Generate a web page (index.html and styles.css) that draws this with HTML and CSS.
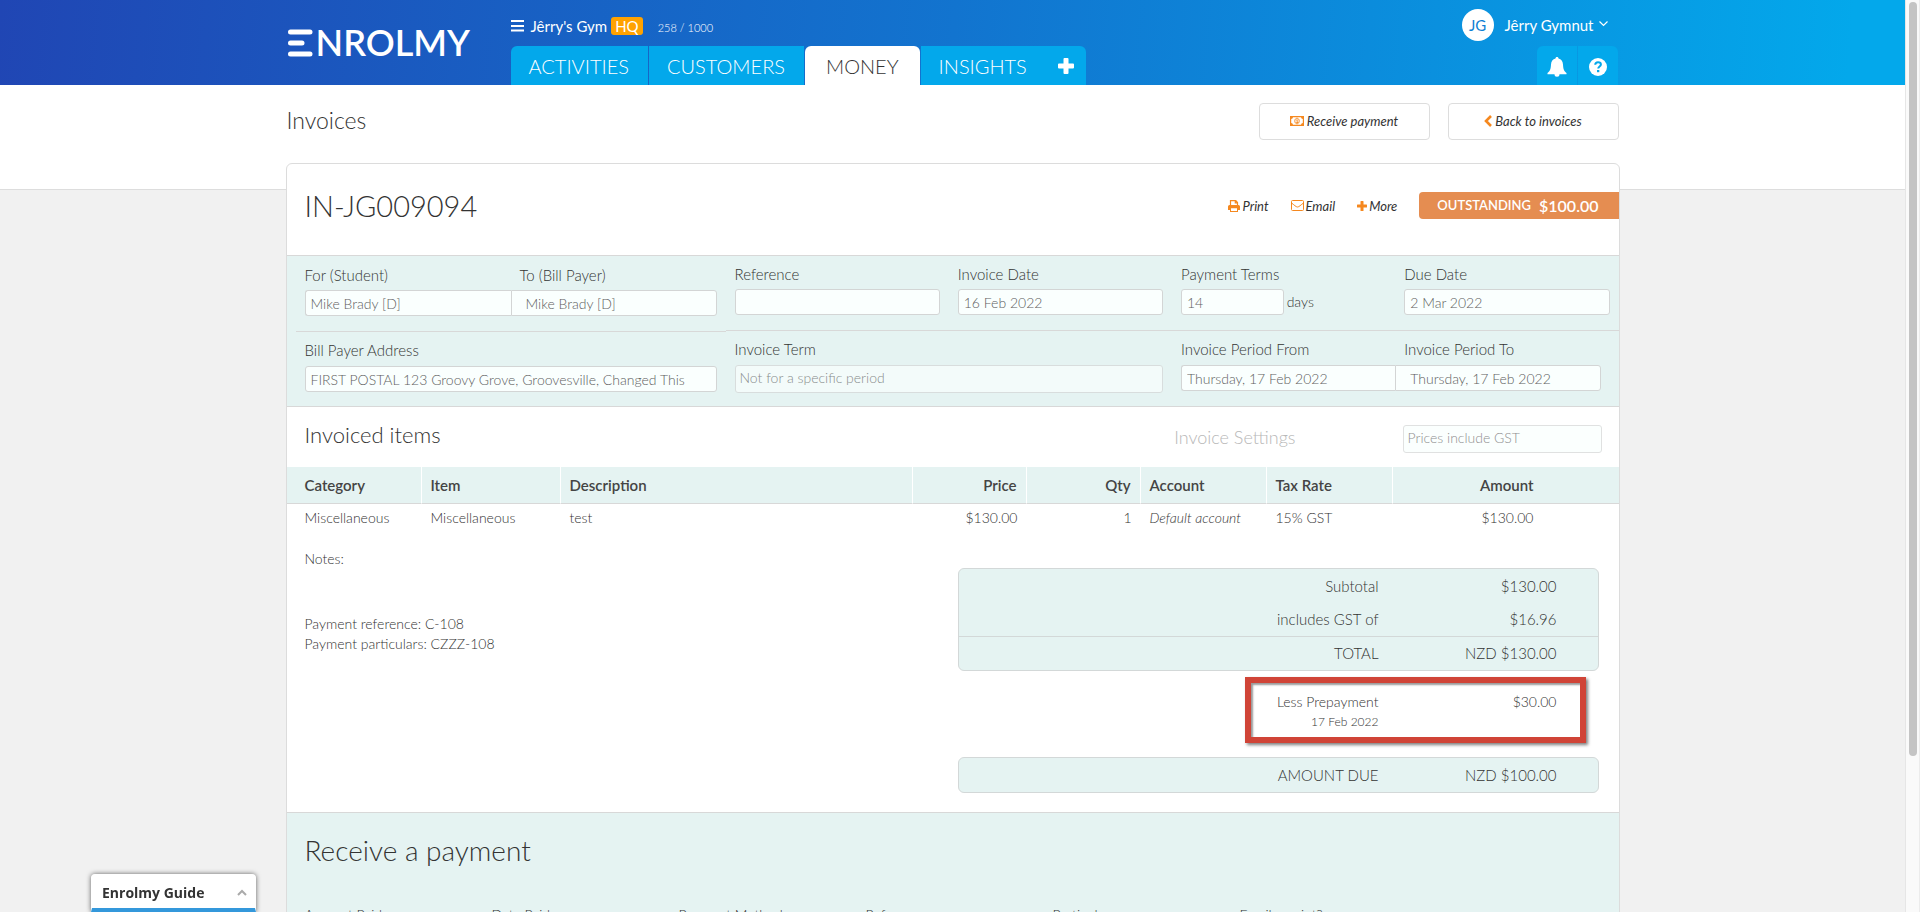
FILE: index.html
```html
<!DOCTYPE html>
<html lang="en">
<head>
  <meta charset="UTF-8">
  <meta name="viewport" content="width=device-width, initial-scale=1.0">
  <title>Invoice IN-JG009094 - Enrolmy</title>
  <link rel="stylesheet" href="styles.css">
</head>
<body>
  <div class="page">
    <header class="topbar">
      <div class="wrap topbar-inner">
        <a class="logo" href="#" aria-label="Enrolmy">
          <svg width="25" height="28" viewBox="0 0 25 28" fill="none" stroke="#fff" stroke-width="5" stroke-linecap="round"><path d="M2.5 3h19.500M2.500 14h11.500M2.500 25h19.500"/></svg>
          <span>NROLMY</span>
        </a>
        <div class="nav-side">
          <div class="org">
            <button class="menu-btn" aria-label="Menu">
              <svg width="13" height="12" viewBox="0 0 13 12" fill="#fff"><path d="M0 0h13v2H0zM0 5h13v2H0zM0 9.500h13v2H0z"/></svg>
            </button>
            <span class="org-name">Jêrry's Gym</span>
            <span class="hq">HQ</span>
            <span class="quota">258 / 1000</span>
          </div>
          <nav class="tabs">
            <a href="#">ACTIVITIES</a>
            <a href="#">CUSTOMERS</a>
            <a href="#" class="active">MONEY</a>
            <a href="#" class="insights">INSIGHTS
              <svg width="16" height="16" viewBox="0 0 16 16" fill="#fff"><path d="M6.500 0h3q1 0 1 1v4.500H15q1 0 1 1v3q0 1-1 1h-4.500V15q0 1-1 1h-3q-1 0-1-1v-4.500H1q-1 0-1-1v-3q0-1 1-1h4.500V1q0-1 1-1z"/></svg>
            </a>
          </nav>
        </div>
        <div class="user-side">
          <div class="user">
            <span class="avatar">JG</span>
            <a href="#">Jêrry Gymnut
              <svg width="9" height="6" viewBox="0 0 9 6" fill="none" stroke="#fff" stroke-width="1.200"><path d="M.5.5l4 4 4-4"/></svg>
            </a>
          </div>
          <div class="tools">
            <button aria-label="Notifications">
              <svg width="20" height="20" viewBox="0 0 20 20" fill="#fff"><path d="M10 0c1 0 1.500.7 1.500 1.500 2.800.6 4.300 2.700 4.500 6 .2 4.500 1 6.700 3.500 8.500v1.200h-7a2.500 2.500 0 0 1-5 0h-7V16C3 14.200 3.800 12 4 7.500c.2-3.300 1.700-5.400 4.500-6C8.500.7 9 0 10 0z"/></svg>
            </button>
            <button aria-label="Help">
              <svg width="18" height="18" viewBox="0 0 18 18"><circle cx="9" cy="9" r="9" fill="#fff"/><path d="M6.200 6.800C6.300 5 7.500 4.200 9 4.200c1.700 0 2.900.9 2.900 2.300 0 1.900-2.700 2-2.700 4" fill="none" stroke="#03a8eb" stroke-width="2"/><rect x="8" y="12" width="2.300" height="2.200" fill="#03a8eb"/></svg>
            </button>
          </div>
        </div>
      </div>
    </header>

    <div class="title-band">
      <div class="wrap title-inner">
        <h1>Invoices</h1>
        <div class="title-actions">
          <button class="btn">
            <svg width="14" height="10" viewBox="0 0 14 10"><path fill="#f5881f" fill-rule="evenodd" d="M0 0h14v10H0zM3 1.200A2 2 0 0 1 1.200 3v4A2 2 0 0 1 3 8.800h8A2 2 0 0 1 12.800 7V3A2 2 0 0 1 11 1.200z"/><path d="M7 2.200c1.400 0 2.200 1.200 2.200 2.800S8.400 7.800 7 7.800 4.800 6.600 4.800 5 5.600 2.200 7 2.200zM6.300 4.200L7.200 3.500v3M6.200 6.500h2" fill="none" stroke="#f5881f" stroke-width=".9"/></svg>
            Receive payment
          </button>
          <button class="btn">
            <svg width="8" height="12" viewBox="0 0 8 12" fill="none" stroke="#f5881f" stroke-width="2.600"><path d="M7 1L2 6l5 5"/></svg>
            Back to invoices
          </button>
        </div>
      </div>
    </div>

    <main class="wrap card">
      <div class="card-head">
        <h2>IN-JG009094</h2>
        <div class="card-actions">
          <a href="#"><svg width="12" height="12" viewBox="0 0 12 12"><path fill="none" stroke="#f5881f" stroke-width="1.200" d="M2.500 6V.6h5.300L9.500 2.500V6M7.300.6v2.200h2.200"/><path fill="#f5881f" fill-rule="evenodd" d="M1.500 5h9Q12 5 12 6.500V10h-2v2H2v-2H0V6.500Q0 5 1.500 5zM3 8.300v2.600h6V8.300z"/></svg> Print</a>
          <a href="#"><svg width="13" height="11" viewBox="0 0 13 11" fill="none" stroke="#f5881f" stroke-width="1"><rect x=".5" y=".5" width="12" height="10" rx="1"/><path d="M.5 3C3 4.800 5 7 6.500 7s3.500-2.200 6-4"/></svg> Email</a>
          <a href="#"><svg width="10" height="10" viewBox="0 0 10 10" fill="#f5881f"><path d="M3.500.500Q3.500 0 4 0h2q.5 0 .5.500v3h3q.5 0 .5.500v2q0 .5-.5.500h-3v3q0 .5-.5.500H4q-.5 0-.5-.500v-3h-3Q0 6.500 0 6V4q0-.5.500-.500h3z"/></svg> More</a>
        </div>
        <div class="status">OUTSTANDING <strong>$100.00</strong></div>
      </div>

      <form class="details">
        <div class="bill">
          <div class="row">
            <div class="field">
              <label for="student">For (Student)</label>
              <input class="join-left" id="student" type="text" value="Mike Brady [D]">
            </div>
            <div class="field">
              <label for="payer">To (Bill Payer)</label>
              <input class="join-right" id="payer" type="text" value="Mike Brady [D]">
            </div>
          </div>
          <div class="row">
            <div class="field">
              <label for="address">Bill Payer Address</label>
              <input id="address" type="text" value="FIRST POSTAL 123 Groovy Grove, Groovesville, Changed This">
            </div>
          </div>
        </div>
        <div class="meta">
          <div class="row">
            <div class="field">
              <label for="reference">Reference</label>
              <input id="reference" type="text">
            </div>
            <div class="field">
              <label for="date">Invoice Date</label>
              <input id="date" type="text" value="16 Feb 2022">
            </div>
            <div class="field">
              <label for="terms">Payment Terms</label>
              <div class="terms"><input id="terms" type="text" value="14"> days</div>
            </div>
            <div class="field">
              <label for="due">Due Date</label>
              <input id="due" type="text" value="2 Mar 2022">
            </div>
          </div>
          <div class="row">
            <div class="field wide">
              <label for="term">Invoice Term</label>
              <select id="term" disabled><option>Not for a specific period</option></select>
            </div>
            <div class="field period-from">
              <label for="from">Invoice Period From</label>
              <input class="join-left" id="from" type="text" value="Thursday, 17 Feb 2022">
            </div>
            <div class="field period-to">
              <label for="to">Invoice Period To</label>
              <input class="join-right" id="to" type="text" value="Thursday, 17 Feb 2022">
            </div>
          </div>
        </div>
      </form>

      <div class="items-head">
        <h3>Invoiced items</h3>
        <label for="gst">Invoice Settings</label>
        <select id="gst" disabled><option>Prices include GST</option></select>
      </div>

      <table class="items">
        <colgroup>
          <col class="c-category"><col class="c-item"><col><col class="c-num"><col class="c-num"><col class="c-acct"><col class="c-acct"><col class="c-amount">
        </colgroup>
        <thead>
          <tr>
            <th>Category</th>
            <th>Item</th>
            <th>Description</th>
            <th class="num">Price</th>
            <th class="num">Qty</th>
            <th>Account</th>
            <th>Tax Rate</th>
            <th class="num">Amount</th>
          </tr>
        </thead>
        <tbody>
          <tr>
            <td>Miscellaneous</td>
            <td>Miscellaneous</td>
            <td>test</td>
            <td class="num">$130.00</td>
            <td class="num">1</td>
            <td><em>Default account</em></td>
            <td>15% GST</td>
            <td class="num">$130.00</td>
          </tr>
        </tbody>
      </table>

      <div class="summary">
        <div class="notes">
          <p>Notes:</p>
          <p class="pay-info">Payment reference: C-108<br>Payment particulars: CZZZ-108</p>
        </div>
        <div class="totals">
          <dl class="box">
            <div><dt>Subtotal</dt><dd>$130.00</dd></div>
            <div><dt>includes GST of</dt><dd>$16.96</dd></div>
            <div class="total"><dt>TOTAL</dt><dd>NZD $130.00</dd></div>
          </dl>
          <dl class="prepayment">
            <div><dt>Less Prepayment<small>17 Feb 2022</small></dt><dd>$30.00</dd></div>
          </dl>
          <dl class="box">
            <div><dt>AMOUNT DUE</dt><dd>NZD $100.00</dd></div>
          </dl>
        </div>
      </div>

      <section class="receive">
        <h2>Receive a payment</h2>
        <form class="receive-fields">
          <div><label for="paid">Amount Paid</label><input id="paid" type="text"></div>
          <div><label for="paid-on">Date Paid</label><input id="paid-on" type="text"></div>
          <div><label for="method">Payment Method</label><input id="method" type="text"></div>
          <div><label for="ref">Reference</label><input id="ref" type="text"></div>
          <div><label for="particulars">Particulars</label><input id="particulars" type="text"></div>
          <div><label for="receipt">Email receipt?</label><input id="receipt" type="checkbox"></div>
        </form>
      </section>
    </main>
  </div>

  <div class="scrollbar"><div class="thumb"></div></div>

  <button class="guide">
    <span>Enrolmy Guide</span>
    <svg width="10" height="7" viewBox="0 0 10 7" fill="none" stroke="#aaa" stroke-width="2"><path d="M1 6l4-4 4 4"/></svg>
  </button>
</body>
</html>
```
FILE: styles.css
```css
* {
  box-sizing: border-box;
}

body {
  margin: 0;
  height: 100vh;
  display: flex;
  overflow: hidden;
  background: #f1f1f1;
  color: #333;
  font-family: Lato, sans-serif;
  font-size: 14px;
  font-weight: 300;
  line-height: 20px;
}

h1, h2, h3, p, dl, dd {
  margin: 0;
  font-weight: 300;
}

a {
  color: inherit;
  text-decoration: none;
}

button, input, select {
  font: inherit;
  color: inherit;
}

button {
  border: none;
  background: none;
  padding: 0;
  cursor: pointer;
}

svg {
  display: block;
  flex: none;
}

.page {
  flex: 1;
  min-width: 0;
  overflow: hidden;
}

.wrap {
  width: 94%;
  max-width: 1334px;
  margin: 0 auto;
}

/* top bar */
.topbar {
  background: linear-gradient(95deg, #2046b4, #1274cf 50%, #03a8eb 97%);
  color: #fff;
}

.topbar-inner {
  display: flex;
  height: 85px;
}

.logo {
  display: flex;
  align-items: center;
  gap: 3px;
  width: 225px;
  padding-left: 2px;
  font-size: 36px;
  font-weight: 600;
}

.logo span {
  padding-bottom: 2px;
}

.nav-side,
.user-side {
  display: flex;
  flex-direction: column;
  justify-content: space-between;
}

.org {
  display: flex;
  align-items: center;
  height: 46px;
  padding-top: 6px;
  font-size: 15px;
  font-weight: 400;
}

.org-name {
  margin: 0 4px 0 7px;
}

.hq {
  padding: 0 4px;
  border-radius: 3px;
  background: #ffa200;
  line-height: 18px;
}

.quota {
  margin: 3px 0 0 15px;
  font-size: 11px;
  font-weight: 300;
}

.tabs {
  display: flex;
  gap: 1px;
  font-size: 20px;
}

.tabs a {
  display: flex;
  align-items: center;
  height: 39px;
  padding: 1px 19px 0 18px;
  background: #03a8eb;
}

.tabs a:first-child {
  border-top-left-radius: 6px;
}

.tabs .active {
  padding: 1px 21px 0;
  border-radius: 6px 6px 0 0;
  background: #fff;
  color: #333;
}

.tabs .insights {
  gap: 31px;
  padding-right: 12px;
  border-top-right-radius: 6px;
}

.user-side {
  margin-left: auto;
}

.user {
  display: flex;
  align-items: center;
  gap: 11px;
  height: 46px;
  padding: 4px 12px 0 0;
  font-size: 15px;
  font-weight: 400;
}

.user a {
  display: flex;
  gap: 5px;
}

.user a svg {
  margin-top: 6px;
}

.avatar {
  width: 32px;
  height: 32px;
  border-radius: 50%;
  background: #fff;
  color: #0d80d4;
  line-height: 32px;
  text-align: center;
}

.tools {
  display: flex;
  align-self: flex-end;
  gap: 1px;
  padding-right: 2px;
}

.tools button {
  display: flex;
  align-items: center;
  justify-content: center;
  width: 40px;
  height: 39px;
  padding-top: 2px;
  background: #03a8eb;
}

.tools button:first-child {
  border-top-left-radius: 6px;
}

.tools button:last-child {
  border-top-right-radius: 6px;
}

/* page title */
.title-band {
  height: 105px;
  border-bottom: 1px solid #ddd;
  background: #fff;
}

.title-inner {
  display: flex;
  justify-content: space-between;
  padding: 18px 1px 0;
}

.title-inner h1 {
  font-size: 23px;
  line-height: 34px;
}

.title-actions {
  display: flex;
  gap: 18px;
}

.btn {
  display: flex;
  align-items: center;
  justify-content: center;
  gap: 3px;
  width: 171px;
  height: 37px;
  padding-bottom: 2px;
  border: 1px solid #ddd;
  border-radius: 4px;
  font-size: 13px;
  font-style: italic;
  font-weight: 400;
}

/* invoice card */
.card {
  margin-top: -27px;
  border: 1px solid #dcdcdc;
  border-radius: 6px 6px 0 0;
  background: #fff;
}

.card-head {
  display: flex;
  align-items: center;
  height: 91px;
  padding-left: 18px;
  padding-bottom: 8px;
}

.card-head h2 {
  font-size: 29px;
  line-height: 40px;
}

.card-actions {
  display: flex;
  gap: 22px;
  margin-left: auto;
  font-size: 13px;
  font-style: italic;
  font-weight: 400;
}

.card-actions a {
  display: flex;
  align-items: center;
  gap: 2px;
}

.status {
  display: flex;
  gap: 8px;
  height: 27px;
  margin-left: 22px;
  padding: 0 20px 0 18px;
  border-radius: 4px 0 0 4px;
  background: #e58d51;
  color: #fff;
  font-size: 13px;
  font-weight: 600;
  line-height: 27px;
}

.status strong {
  font-size: 16px;
  font-weight: 600;
}

.details {
  display: flex;
  padding-left: 9px;
  border: solid #d8d8d8;
  border-width: 1px 0;
  background: #e5f3f2;
}

.bill {
  flex: 430;
  min-width: 0;
  padding-top: 1px;
}

.meta {
  flex: 893;
  min-width: 0;
}

.row {
  display: grid;
  grid-auto-flow: column;
  grid-auto-columns: minmax(0, 1fr);
  padding: 8px 0 15px;
}

.row:first-child {
  border-bottom: 1px solid #d8d8d8;
}

.bill .row:last-child {
  padding-bottom: 14px;
}

.field {
  padding: 0 9px;
}

.field.wide {
  grid-column: span 2;
}

.bill .field + .field {
  padding-left: 0;
}

.bill .field:not(:only-child):first-child,
.period-from {
  padding-right: 0;
}

.field.period-to {
  padding-left: 0;
  padding-right: 18px;
}

.field label {
  display: block;
  margin-bottom: 5px;
  font-size: 15px;
}

.row:last-child label {
  margin-bottom: 6px;
}

.bill .field + .field label,
.period-to label {
  padding-left: 9px;
}

.field input,
select {
  display: block;
  width: 100%;
  height: 26px;
  padding: 0 5px;
  border: 1px solid #d3d5d5;
  border-radius: 3px;
  background: #fafffe;
  color: #606060;
}

.field .join-left {
  border-right: none;
  border-radius: 3px 0 0 3px;
}

.field .join-right {
  padding-left: 14px;
  border-radius: 0 3px 3px 0;
}

select {
  height: 28px;
  padding: 0 4px 2px;
  appearance: none;
  opacity: 0.7;
}

.row select {
  margin-bottom: -2px;
}

.terms {
  display: flex;
  align-items: center;
  gap: 3px;
}

.terms input {
  width: 50%;
}

/* line items */
.items-head {
  display: flex;
  align-items: center;
  height: 60px;
  padding: 4px 17px 0 18px;
}

.items-head h3 {
  margin-right: auto;
  padding-bottom: 8px;
  font-size: 22px;
}

.items-head label {
  margin-right: 107px;
  padding-bottom: 4px;
  color: #b8b8b8;
  font-size: 18px;
}

.items-head select {
  width: 199px;
}

.items {
  width: 100%;
  table-layout: fixed;
  border-collapse: separate;
  border-spacing: 0;
}

.c-category { width: 135px; }
.c-item { width: 139px; }
.c-num { width: 114px; }
.c-acct { width: 126px; }
.c-amount { width: 226px; }

.items th {
  height: 37px;
  padding: 0 9px 1px;
  border-right: 1px solid #fff;
  border-bottom: 1px solid #d8d8d8;
  background: #e5f3f2;
  color: #444;
  font-size: 15px;
  font-weight: 600;
  text-align: left;
}

.items th:last-child {
  border-right: none;
}

.items td {
  height: 28px;
  padding: 0 9px 1px;
}

.items th:first-child,
.items td:first-child {
  padding-left: 18px;
}

.items .num {
  text-align: right;
}

.items .num:last-child {
  padding-right: 85px;
}

.summary {
  display: flex;
  justify-content: space-between;
  padding: 16px 20px 19px 18px;
}

.notes {
  padding-top: 1px;
}

.pay-info {
  margin-top: 45px;
}

.totals {
  width: 49.500%;
  padding-top: 20px;
  font-size: 15px;
}

.totals dl > div {
  display: flex;
  justify-content: flex-end;
  text-align: right;
  line-height: 33px;
}

.totals dd {
  width: 178px;
}

.box {
  padding: 1px 41px 0 0;
  border: 1px solid #d3d8d8;
  border-radius: 6px;
  background: #e5f3f2;
}

.totals .total {
  margin-right: -41px;
  padding-right: 41px;
  border-top: 1px solid #d3d8d8;
}

.prepayment {
  width: 341px;
  height: 66px;
  margin: 6px 13px 14px auto;
  padding: 9px 23px 0 0;
  border: 6px solid #d04437;
  box-shadow: 2px 2px 3px rgba(0, 0, 0, 0.5), inset 2px 2px 2px rgba(0, 0, 0, 0.4);
  font-size: 14px;
}

.totals .prepayment > div {
  line-height: 20px;
}

.prepayment small {
  display: block;
  font-size: 12px;
}

.receive {
  padding: 17px 18px 40px;
  border-top: 1px solid #d8d8d8;
  background: #e5f3f2;
}

.receive h2 {
  font-size: 28px;
  line-height: 40px;
}

.receive-fields {
  display: grid;
  grid-template-columns: repeat(7, 1fr);
  margin: 35px -13px 0 0;
}

.receive-fields label,
.receive-fields input {
  display: block;
}

.receive-fields input {
  width: 90%;
}

/* scroll bar */
.scrollbar {
  width: 15px;
  padding: 2px 3px;
  border-left: 1px solid #e6e6e6;
  border-right: 1px solid #ececec;
  background: #fafafa;
}

.thumb {
  width: 8px;
  height: 83%;
  border-radius: 4px;
  background: #c4c4c4;
}

/* help launcher stuck to the bottom edge */
.guide {
  position: fixed;
  left: 91px;
  bottom: 0;
  display: flex;
  align-items: center;
  justify-content: space-between;
  width: 165px;
  height: 38px;
  padding: 2px 8px 0 10px;
  border: 1px solid #fff;
  border-bottom: 4px solid #3498db;
  border-radius: 4px 4px 0 0;
  background: #fff;
  box-shadow: 0 0 5px rgba(0, 0, 0, 0.6);
  font-family: "Open Sans", sans-serif;
  font-size: 14px;
  font-weight: 700;
}
```
